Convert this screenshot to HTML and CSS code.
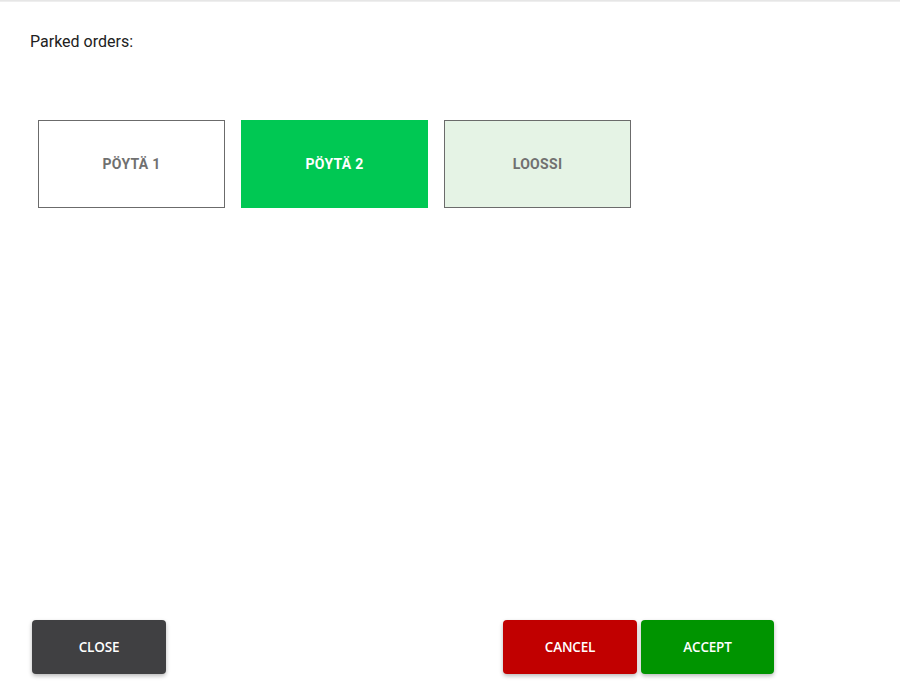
FILE: index.html
```html
<!DOCTYPE html>
<html>
<head>
<meta charset="utf-8">
<link rel="stylesheet" href="styles.css">
</head>
<body>
<div class="page">
  <div class="topline"></div>
  <div class="content">
    <div class="title">Parked orders:</div>
    <div class="tiles">
      <div class="tile">PÖYTÄ 1</div>
      <div class="tile tile-active">PÖYTÄ 2</div>
      <div class="tile tile-light">LOOSSI</div>
    </div>
  </div>
  <div class="footer">
    <button class="btn btn-close">CLOSE</button>
    <div class="right">
      <button class="btn btn-cancel">CANCEL</button>
      <button class="btn btn-accept">ACCEPT</button>
    </div>
  </div>
</div>
</body>
</html>
```
FILE: styles.css
```css
html, body {
  margin: 0;
  padding: 0;
  background: #ffffff;
}
.page {
  height: 683px;
  display: flex;
  flex-direction: column;
  font-family: Roboto, "Liberation Sans", sans-serif;
}
.topline {
  height: 2px;
  background: linear-gradient(#e2e2e2, #f2f2f2);
}
.content {
  flex: 1;
  padding: 0 0 0 30px;
}
.title {
  margin-top: 30px;
  font-size: 16px;
  line-height: 19px;
  color: #212121;
}
.tiles {
  display: flex;
  gap: 16px;
  margin-top: 69px;
  padding-left: 8px;
}
.tile {
  box-sizing: border-box;
  width: 187px;
  height: 88px;
  border: 1px solid #6b6b6b;
  background: #ffffff;
  display: flex;
  align-items: center;
  justify-content: center;
  font-weight: 700;
  font-size: 14px;
  letter-spacing: 0.3px;
  color: #707070;
}
.tile-active {
  background: #00c853;
  border-color: #00c853;
  color: #ffffff;
}
.tile-light {
  background: #e5f3e5;
}
.footer {
  display: flex;
  justify-content: space-between;
  padding: 0 126px 9px 32px;
}
.right {
  display: flex;
  gap: 4px;
}
.btn {
  width: 134px;
  height: 54px;
  border: none;
  border-radius: 4px;
  color: #ffffff;
  font-family: "Open Sans", "Liberation Sans", sans-serif;
  font-size: 13.5px;
  font-weight: 600;
  letter-spacing: -0.2px;
  box-shadow: 0 2px 4px rgba(0, 0, 0, 0.28);
  padding: 0;
}
.btn-close {
  background: #404042;
}
.btn-cancel {
  background: #c10000;
}
.btn-accept {
  width: 133px;
  background: #009400;
}
```
